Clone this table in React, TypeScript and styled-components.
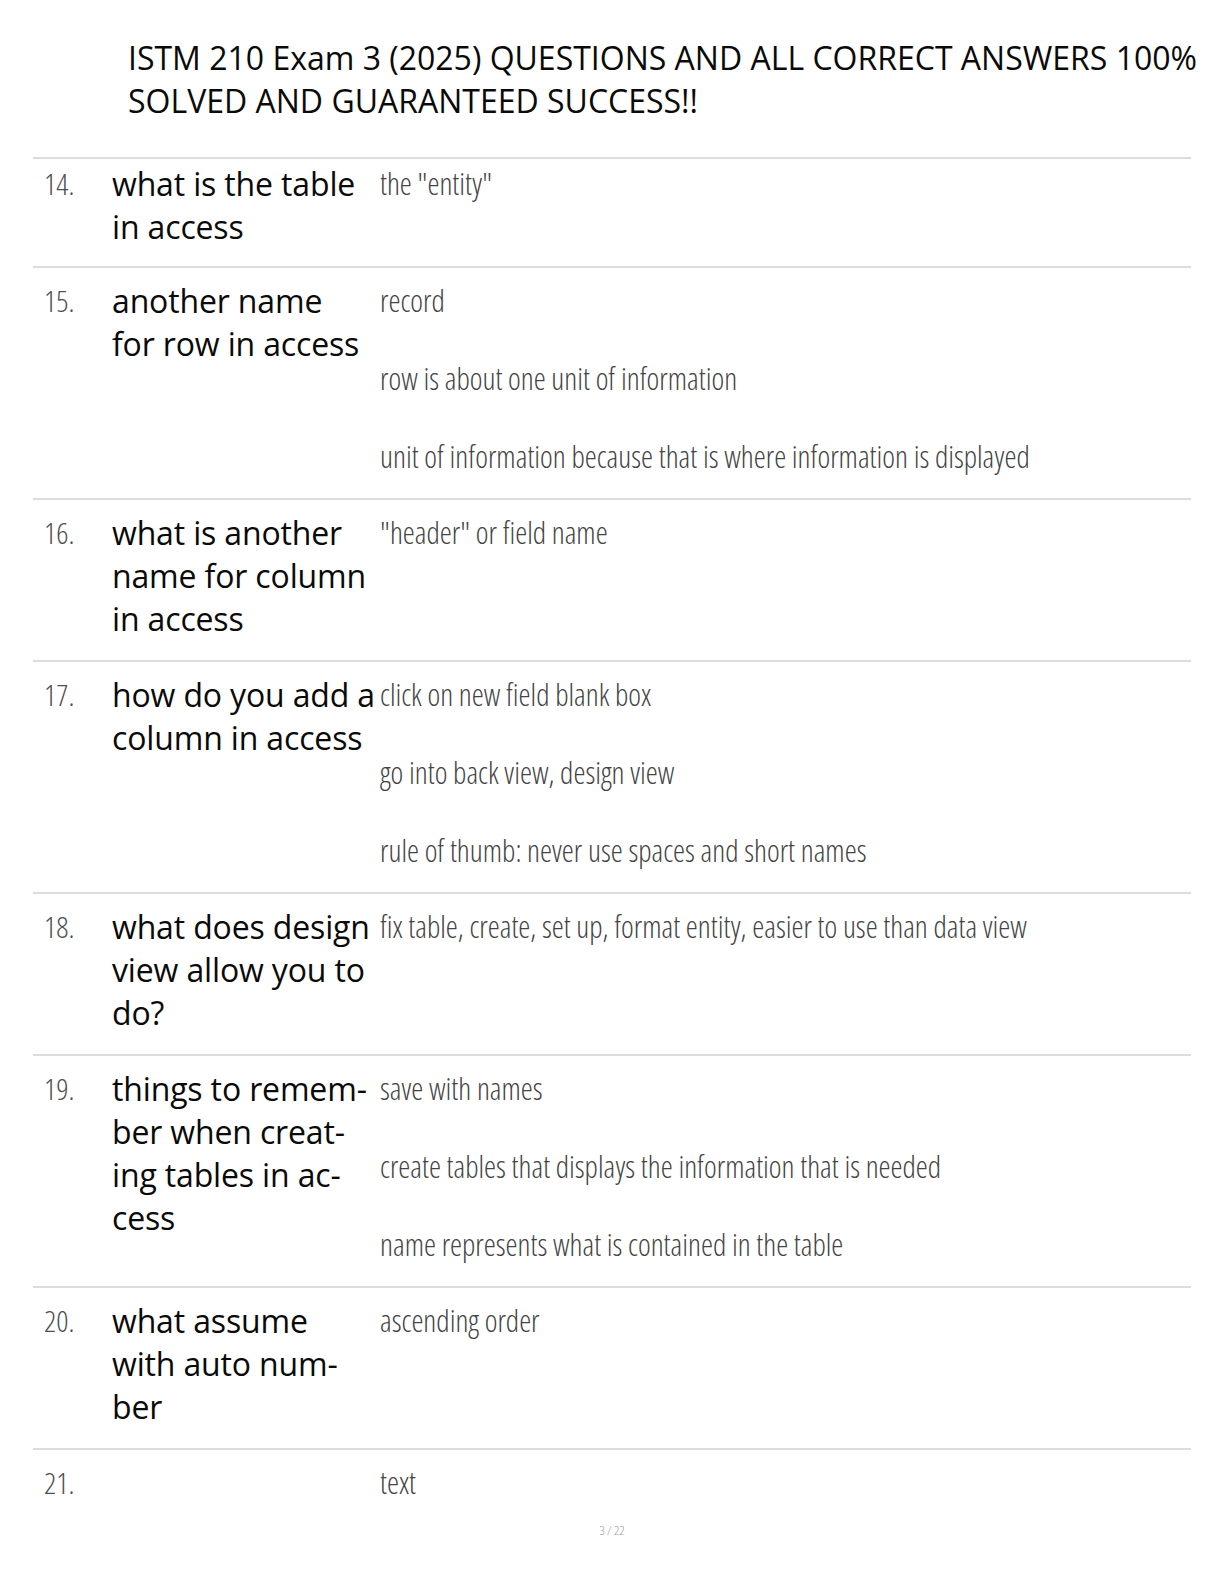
import React from 'react';
import styled, { createGlobalStyle } from 'styled-components';

const colors = {
  text: '#0a0a0a',
  answer: '#444444',
  number: '#4f4f4f',
  rule: '#dcdce4',
  footer: '#9a9a9a',
};

const GlobalStyle = createGlobalStyle`
  html, body {
    margin: 0;
    padding: 0;
    background: #fff;
  }
  body {
    font-family: "Open Sans", "Liberation Sans", sans-serif;
    color: ${colors.text};
  }
`;

const Page = styled.div`
  width: 1224px;
  min-height: 1584px;
  box-sizing: border-box;
  padding: 36px 0 0 0;
`;

const Title = styled.h1`
  margin: 0 0 35px 128px;
  font-size: 32px;
  line-height: 43px;
  font-weight: 400;
`;

const Table = styled.div`
  margin-left: 33px;
  width: 1158px;
`;

// rows open with a rule line; the first one on this page is cut short at the top
const Row = styled.div<{ $top?: number; $bottom?: number }>`
  display: grid;
  grid-template-columns: 68px 268px 1fr;
  padding: ${p => p.$top ?? 11}px 0 ${p => p.$bottom ?? 20}px 11px;
  border-top: 2px solid ${colors.rule};
`;

const Num = styled.div`
  font-size: 30px;
  line-height: 43px;
  font-weight: 300;
  font-stretch: 75%;
  color: ${colors.number};
`;

const Question = styled.div`
  font-size: 32px;
  line-height: 43px;
  white-space: nowrap;
  letter-spacing: -0.15px;
`;

const QLine = styled.div``;

const Answers = styled.div`
  display: flex;
  flex-direction: column;
  gap: 35px;
`;

const Answer = styled.div`
  font-size: 30.4px;
  line-height: 43px;
  font-weight: 300;
  font-stretch: 75%;
  color: ${colors.answer};
  white-space: nowrap;
`;

const Footer = styled.div`
  text-align: center;
  font-size: 13px;
  line-height: 18px;
  font-weight: 300;
  font-stretch: 75%;
  color: ${colors.footer};
  margin-top: 17px;
`;

type Item = { n: number; q: string[]; a: string[]; top?: number; bottom?: number };

// question lines follow the breaks of the printed page
const rows: Item[] = [
  { n: 14, q: ['what is the table', 'in access'], a: ['the "entity"'], top: 3, bottom: 18 },
  {
    n: 15,
    q: ['another name', 'for row in access'],
    a: [
      'record',
      'row is about one unit of information',
      'unit of information because that is where information is displayed',
    ],
  },
  { n: 16, q: ['what is another', 'name for column', 'in access'], a: ['"header" or field name'] },
  {
    n: 17,
    q: ['how do you add a', 'column in access'],
    a: [
      'click on new field blank box',
      'go into back view, design view',
      'rule of thumb: never use spaces and short names',
    ],
  },
  {
    n: 18,
    q: ['what does design', 'view allow you to', 'do?'],
    a: ['fix table, create, set up, format entity, easier to use than data view'],
  },
  {
    n: 19,
    q: ['things to remem-', 'ber when creat-', 'ing tables in ac-', 'cess'],
    a: [
      'save with names',
      'create tables that displays the information that is needed',
      'name represents what is contained in the table',
    ],
  },
  { n: 20, q: ['what assume', 'with auto num-', 'ber'], a: ['ascending order'] },
  { n: 21, q: [], a: ['text'], bottom: 0 },
];

export default function App() {
  return (
    <Page>
      <GlobalStyle />
      <Title>
        ISTM 210 Exam 3 (2025) QUESTIONS AND ALL CORRECT ANSWERS 100%
        <br />
        SOLVED AND GUARANTEED SUCCESS!!
      </Title>
      <Table>
        {rows.map(r => (
          <Row key={r.n} $top={r.top} $bottom={r.bottom}>
            <Num>{r.n}.</Num>
            <Question>
              {r.q.map(line => (
                <QLine key={line}>{line}</QLine>
              ))}
            </Question>
            <Answers>
              {r.a.map(t => (
                <Answer key={t}>{t}</Answer>
              ))}
            </Answers>
          </Row>
        ))}
      </Table>
      <Footer>3 / 22</Footer>
    </Page>
  );
}
